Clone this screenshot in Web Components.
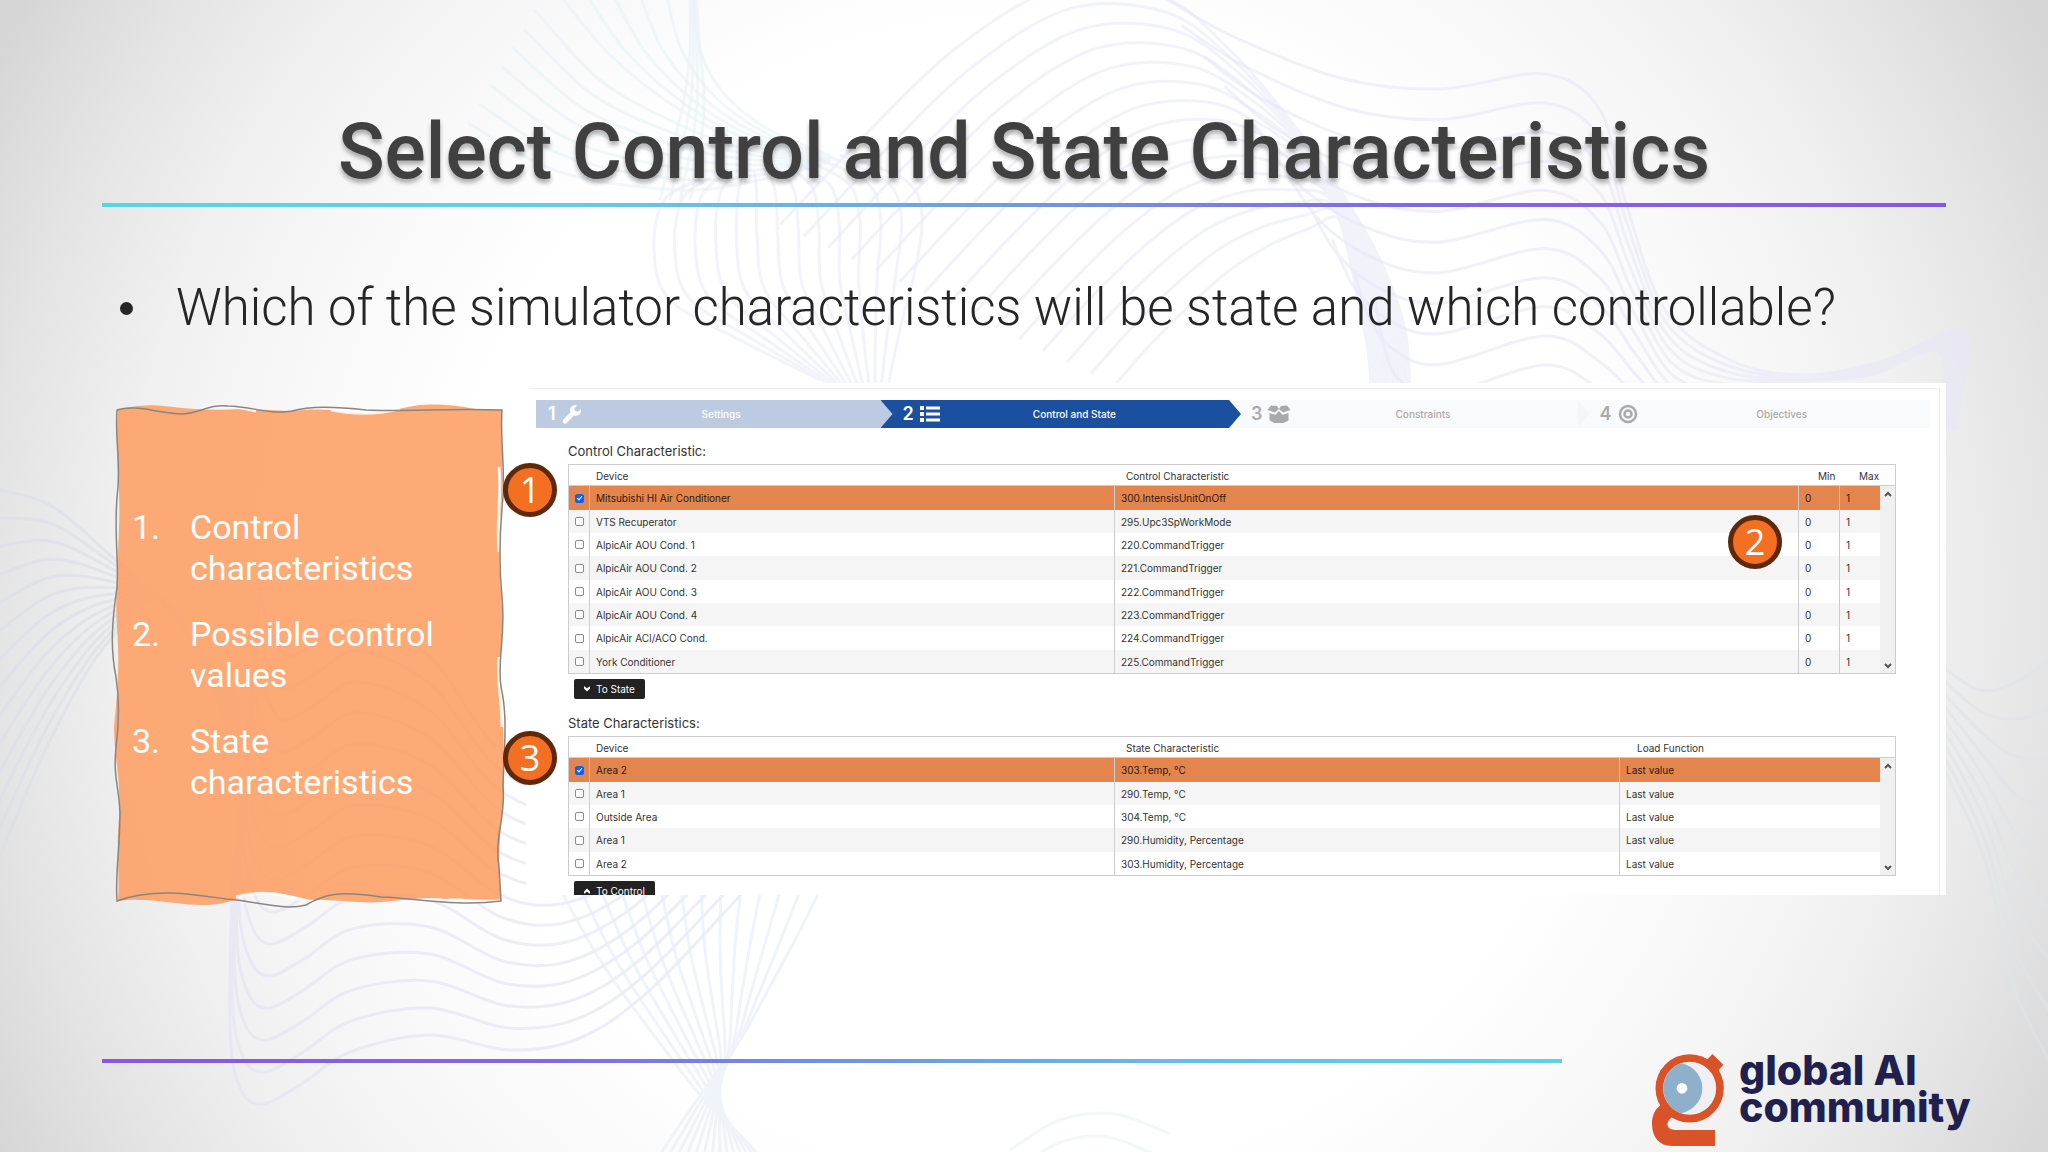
<!DOCTYPE html>
<html lang="en">
<head>
<meta charset="utf-8">
<title>Select Control and State Characteristics</title>
<style>
  body { margin: 0; font-family: Roboto, "Liberation Sans", sans-serif; color: #262626; }
</style>
</head>
<body>
<slide-page>
  <slide-title>Select Control and State Characteristics</slide-title>
  <slide-bullet>Which of the simulator characteristics will be state and which controllable?</slide-bullet>
  <slide-columns>
    <paper-note>
      <note-item number="1.">Control characteristics</note-item>
      <note-item number="2.">Possible control values</note-item>
      <note-item number="3.">State characteristics</note-item>
    </paper-note>
    <app-panel></app-panel>
  </slide-columns>
  <slide-footer slot="footer"></slide-footer>
</slide-page>

<script>
class Base extends HTMLElement {
  constructor() {
    super();
    this.attachShadow({ mode: 'open' });
  }
  connectedCallback() {
    if (!this.shadowRoot.firstChild) this.shadowRoot.innerHTML = this.render();
  }
}

/* Background: families of curves blended between two edge curves */
customElements.define('wave-field', class extends Base {
  spline(p) {
    let d = `M${p[0][0]} ${p[0][1]}`;
    for (let i = 0; i < p.length - 1; i++) {
      const a = p[i - 1] || p[i], b = p[i], c = p[i + 1], e = p[i + 2] || c;
      d += `C${[b[0] + (c[0] - a[0]) / 6, b[1] + (c[1] - a[1]) / 6, c[0] - (e[0] - b[0]) / 6, c[1] - (e[1] - b[1]) / 6, c[0], c[1]].map(v => v.toFixed(1)).join(' ')}`;
    }
    return d;
  }
  family(n, color, opacity, a, b) {
    let s = '';
    for (let i = 0; i < n; i++) {
      const t = i / (n - 1);
      s += `<path d="${this.spline(a.map((p, j) => [p[0] + (b[j][0] - p[0]) * t, p[1] + (b[j][1] - p[1]) * t]))}"/>`;
    }
    return `<g stroke="${color}" opacity="${opacity}">${s}</g>`;
  }
  render() {
    const f = this.family.bind(this);
    return `<style>
      :host { display: block; }
      svg { width: 100%; height: 100%; display: block; }
    </style>
    <svg viewBox="0 0 2048 1152" preserveAspectRatio="none" fill="none" stroke-width="3" aria-hidden="true">
    ${f(15, '#ebebfa', .6,
      [[780,225],[865,135],[960,45],[1060,-12],[1160,-5],[1230,50],[1290,120],[1340,190],[1380,260],[1405,330],[1410,400]],
      [[1115,385],[1150,345],[1190,305],[1230,270],[1270,245],[1310,228],[1338,218],[1350,260],[1360,310],[1368,350],[1372,400]])}
    ${f(11, '#e9e8f8', .6,
      [[1160,-5],[1230,35],[1340,78],[1440,89],[1545,74],[1600,110],[1625,200],[1665,310],[1730,360],[1800,375],[1880,362],[1955,330],[1968,350],[1955,430]],
      [[1375,300],[1385,350],[1400,380],[1440,395],[1545,365],[1600,390],[1640,420],[1680,440],[1720,420],[1790,385],[1870,375],[1930,350],[1945,370],[1935,430]])}
    ${f(6, '#e8f4f8', .6,
      [[693,-5],[700,50],[725,95],[770,130],[830,155]],
      [[560,-5],[610,55],[680,110],[750,145],[830,158]])}
    ${f(7, '#e8f3f7', .6,
      [[535,10],[600,80],[680,125],[750,150],[830,160]],
      [[468,123],[560,172],[680,190],[760,180],[830,162]])}
    ${f(4, '#e8f3f7', .6,
      [[690,-5],[690,50],[684,100],[672,150],[660,200]],
      [[696,-5],[700,50],[704,100],[700,150],[690,200]])}
    ${f(14, '#ebecf9', .6,
      [[700,180],[664,200],[654,250],[670,300],[740,340],[820,380]],
      [[840,155],[905,180],[922,215],[915,270],[900,330],[885,400]])}
    ${f(15, '#e4e3f3', .6,
      [[232,880],[230,1030],[240,1088],[262,1104],[300,1085],[350,1052],[430,1035],[510,1050],[580,1038],[650,990],[745,890]],
      [[262,560],[262,600],[275,640],[290,656],[320,640],[360,620],[430,657],[490,740],[540,770],[600,760],[660,720]])}
    ${f(14, '#e6eef7', .6,
      [[555,880],[600,960],[650,1030],[700,1095],[745,1140],[780,1180]],
      [[825,880],[795,940],[768,990],[740,1040],[690,1110],[650,1170]])}
    ${f(14, '#dcdfea', .6,
      [[-10,488],[50,505],[110,555],[160,600],[240,700]],
      [[-10,880],[50,740],[110,640],[170,605],[240,760]])}
    ${f(9, '#e0e5e8', .6,
      [[1940,665],[1980,690],[2020,680],[2060,650]],
      [[1940,760],[1985,860],[2015,990],[2060,1080]])}
    ${f(3, '#eaf3f5', .6,
      [[1010,1150],[1060,1120],[1115,1114],[1170,1134]],
      [[1020,1190],[1060,1165],[1100,1160],[1150,1180]])}
    </svg>`;
  }
});

customElements.define('slide-page', class extends Base {
  render() {
    return `<style>
      :host {
        display: flex; flex-direction: column; box-sizing: border-box; min-height: 100vh;
        position: relative; overflow: hidden; padding: 107px 0 6px;
        background: radial-gradient(circle 1200px at 50% 52%, #fff 0, #fff 48%, #f7f7f7 65%, #f0f0f0 75%, #e4e4e4 86%, #d6d6d6 97%);
      }
      wave-field { position: absolute; inset: 0; }
      main { position: relative; padding: 0 102px; }
      footer { position: relative; margin-top: auto; }
    </style>
    <wave-field></wave-field>
    <main><slot></slot></main>
    <footer><slot name="footer"></slot></footer>`;
  }
});

customElements.define('slide-title', class extends Base {
  render() {
    return `<style>
      :host { display: block; }
      h1 {
        margin: 0 0 6px; font-size: 77px; line-height: 90px; font-weight: 500; text-align: center;
        color: #404040; text-shadow: 0 4px 4px rgba(0,0,0,.3);
      }
      div { height: 4px; background: linear-gradient(90deg, #58d6e0, #62d0e0 25%, #8268e8 70%, #8a54ea); }
    </style>
    <h1><slot></slot></h1><div></div>`;
  }
});

customElements.define('slide-bullet', class extends Base {
  render() {
    return `<style>
      :host { display: block; margin-top: 70px; }
      ul { margin: 0; padding: 0 0 0 18px; list-style: none; }
      li { display: flex; align-items: center; gap: 43px; font-size: 51px; line-height: 62px; font-weight: 300; }
      i { width: 13px; height: 13px; border-radius: 50%; background: #262626; flex: none; }
    </style>
    <ul><li><i></i><span><slot></slot></span></li></ul>`;
  }
});

customElements.define('slide-columns', class extends Base {
  render() {
    return `<style>
      :host { display: flex; align-items: flex-start; gap: 23px; margin-top: 44px; padding-left: 14px; }
      ::slotted(paper-note) { flex: 0 0 387px; }
      ::slotted(app-panel) { flex: 1; min-width: 0; }
    </style><slot></slot>`;
  }
});

customElements.define('note-item', class extends Base {
  render() {
    return `<style>
      :host { display: flex; }
      b { flex: 0 0 58px; font-weight: 400; }
      p { margin: 0; flex: 1; }
    </style><b>${this.getAttribute('number')}</b><p><slot></slot></p>`;
  }
});

customElements.define('paper-note', class extends Base {
  render() {
    return `<style>
      :host { display: block; position: relative; margin-top: 24px; padding: 100px 20px 100px 16px; box-sizing: border-box; }
      svg { position: absolute; inset: 0; width: 100%; height: 100%; overflow: visible; }
      div { position: relative; display: grid; gap: 25px; color: #fff; font-size: 34px; line-height: 41px; }
    </style>
    <svg viewBox="0 0 387 496" preserveAspectRatio="none" aria-hidden="true">
      <path fill="#fda066" fill-opacity=".89" d="M2 2C20 -1 34 -3 48 -1C72 2 100 4 125 2C150 2 160 4 178 4C200 1 215 3 235 5C260 8 275 3 292 0C310 -5 340 -2 360 2L386 3C384 30 388 60 386 90C382 130 383 160 386 200C388 230 382 260 385 290C388 320 389 370 387 400C383 430 382 460 385 494C370 496 350 490 330 492C310 489 290 493 265 495C245 497 215 492 190 493C170 486 145 484 125 489C110 500 80 499 60 496C40 494 20 491 2 494C4 470 0 440 3 410C5 370 -2 350 -2 320C1 290 4 260 1 220C-1 190 2 160 3 120C5 80 -1 50 2 2Z"/>
      <path fill="none" stroke="#fff" stroke-width="3" opacity=".85" d="M85 2C100 -4 118 -1 140 4M215 3C240 8 262 7 284 2M120 490C150 481 175 490 195 495M295 494C330 492 350 495 384 494M383 60C386 90 380 110 383 145M383 250C381 280 386 290 386 320"/>
      <path fill="none" stroke="#8a8580" stroke-width="1.5" d="M1 3C20 -3 40 6 66 7C85 6 92 -3 112 -1C138 0 155 8 176 4C195 -2 225 0 250 3C290 5 330 1 386 3C384 30 389 60 387 90C383 130 383 160 386 190C390 230 381 250 385 280C392 310 388 340 387 380C390 410 378 430 383 460L385 494C340 500 300 491 265 490C225 484 210 486 190 498C165 504 140 494 110 492C80 488 40 480 1 494C-1 470 4 440 4 405C3 380 -3 370 0 340C4 310 3 290 0 270C-6 240 -4 215 1 180C3 150 -3 120 2 80C4 50 -1 30 1 3Z"/>
    </svg>
    <div><slot></slot></div>`;
  }
});

customElements.define('number-badge', class extends Base {
  render() {
    return `<style>
      :host {
        display: flex; align-items: center; justify-content: center; box-sizing: border-box;
        width: 54px; height: 54px; border: 5px solid #5e280b; border-radius: 50%;
        background: #f36f21; color: #fff; font: 400 36px/44px "Open Sans", "Noto Sans", sans-serif;
      }
    </style><slot></slot>`;
  }
});

customElements.define('step-nav', class extends Base {
  render() {
    const steps = [
      ['Settings', 'done', '<path d="M19 5.2a5.4 5.4 0 0 1-7.2 6.2L5 18.8a2.4 2.4 0 0 1-3.6-3.4l7-7A5.4 5.4 0 0 1 15 1.200l-2.800 3.300.9 2.500 2.500.7z"/>'],
      ['Control and State', 'now', '<path d="M0 2h4v4H0zM0 8h4v4H0zM0 14h4v4H0zM6 2.500h14v3H6zM6 8.500h14v3H6zM6 14.500h14v3H6z"/>'],
      ['Constraints', '', '<path d="M3 1.500 9 2 11 5l2-3 6-.5L22.500 6 15 8.500 11 5 7 8.500-.5 6zM1.500 9l6 1.700L11 7l3.500 3.700 6-1.700v7.500L15.500 19h-9l-5-2.500z"/>'],
      ['Objectives', '', '<circle cx="10" cy="10" r="8" fill="none" stroke="currentColor" stroke-width="2.500"/><circle cx="10" cy="10" r="3.500" fill="none" stroke="currentColor" stroke-width="2.500"/>']
    ];
    return `<style>
      :host { display: block; }
      ol { display: flex; margin: 0; padding: 0; list-style: none; }
      li { flex: 1 1 4px; min-width: 0; position: relative; }
      li:first-child { flex-basis: 0; }
      li:last-child { flex-basis: 8px; }
      button {
        display: flex; align-items: center; width: 100%; height: 28px; padding: 0 12px; border: 0;
        background: #f9fafb; color: #aaa; font: 500 10px/14px Inter, "Liberation Sans", sans-serif; text-align: center;
      }
      b { font-size: 18px; line-height: 28px; font-weight: 600; margin-right: 6px; }
      li + li b { margin-left: 10px; }
      svg { width: 20px; height: 20px; overflow: visible; fill: currentColor; }
      span { flex: 1; padding-right: 8px; }
      li:last-child button { padding-right: 4px; }
      li:last-child span { padding-right: 0; }
      li::after {
        content: ""; position: absolute; z-index: 1; left: 100%; top: 0; width: 12px; height: 28px;
        background: #f9fafb; clip-path: polygon(0 0, 100% 50%, 0 100%);
      }
      li:nth-child(3)::after { background: #f5f6f7; }
      li:last-child::after { display: none; }
      .done button, .done::after { background: #bccbe2; color: #fff; }
      .now button, .now::after { background: #1b4f9f; color: #fff; }
    </style>
    <ol>${steps.map((s, i) => `<li class="${s[1]}"><button type="button"><b>${i + 1}</b><svg viewBox="0 0 20 20" aria-hidden="true">${s[2]}</svg><span>${s[0]}</span></button></li>`).join('')}</ol>`;
  }
});

customElements.define('data-grid', class extends Base {
  render() {
    const control = this.getAttribute('kind') === 'control';
    const heads = control ? ['Device', 'Control Characteristic', 'Min', 'Max'] : ['Device', 'State Characteristic', 'Load Function'];
    const cols = control ? '<col class="dev"><col><col class="num"><col class="num">' : '<col class="dev"><col><col class="load">';
    const rows = control ? [
      ['Mitsubishi HI Air Conditioner', '300.IntensisUnitOnOff'],
      ['VTS Recuperator', '295.Upc3SpWorkMode'],
      ['AlpicAir AOU Cond. 1', '220.CommandTrigger'],
      ['AlpicAir AOU Cond. 2', '221.CommandTrigger'],
      ['AlpicAir AOU Cond. 3', '222.CommandTrigger'],
      ['AlpicAir AOU Cond. 4', '223.CommandTrigger'],
      ['AlpicAir ACI/ACO Cond.', '224.CommandTrigger'],
      ['York Conditioner', '225.CommandTrigger']
    ].map(r => [...r, '0', '1']) : [
      ['Area 2', '303.Temp, °C'], ['Area 1', '290.Temp, °C'], ['Outside Area', '304.Temp, °C'],
      ['Area 1', '290.Humidity, Percentage'], ['Area 2', '303.Humidity, Percentage']
    ].map(r => [...r, 'Last value']);
    const arrow = i => i === 0 ? '<svg viewBox="0 0 8 6" aria-hidden="true"><path d="M1 5 4 2 7 5"/></svg>'
      : i === rows.length - 1 ? '<svg class="low" viewBox="0 0 8 6" aria-hidden="true"><path d="M1 1 4 4 7 1"/></svg>' : '';
    return `<style>
      :host { display: block; }
      table {
        width: 100%; table-layout: fixed; border-collapse: separate; border-spacing: 0; background: #fff;
        border: 1px solid #ccc; font: 400 10px/14px Inter, "Liberation Sans", sans-serif; color: #333;
      }
      .tick { width: 20px; } .dev { width: 525px; } .num { width: 41px; } .load { width: 261px; } .bar { width: 15px; }
      th, td { padding: 0 6px; text-align: left; white-space: nowrap; }
      thead th, thead td { height: 21px; padding: 2px 0 0 12px; box-sizing: border-box; font-weight: 400; border-bottom: 1px solid #ccc; overflow: visible; }
      thead th:nth-child(2) { padding-left: 7px; }
      thead th:nth-child(n+4) { padding-left: 20px; }
      .state thead th:nth-child(4) { padding-left: 18px; }
      tbody tr { height: 23px; }
      tbody tr:nth-child(3n+1) { height: 24px; }
      tbody tr:nth-child(even) { background: #f5f5f5; }
      tbody tr:first-child { background: #e5854e; color: #2b1a0c; }
      tbody td + td { border-left: 1px solid #ccc; }
      tbody td:first-child { padding: 0; text-align: center; }
      tbody .end { padding: 0; border: 0; background: #f0f0f0; text-align: center; vertical-align: top; }
      .end svg { display: block; width: 8px; height: 6px; margin: 5px auto; fill: none; stroke: #555; stroke-width: 2; }
      .end .low { margin-top: 13px; margin-bottom: 0; }
      input {
        appearance: none; display: block; position: relative; box-sizing: border-box; width: 9px; height: 9px;
        margin: 0 auto; border: 1px solid #8a8a8a; border-radius: 2px; background: #fff;
      }
      input:checked { border-color: #0b66e4; background: #0b66e4; }
      input:checked::after {
        content: ""; position: absolute; left: 2px; top: 0; width: 2px; height: 4px;
        border: solid #fff; border-width: 0 1px 1px 0; transform: rotate(40deg);
      }
    </style>
    <table class="${control ? 'control' : 'state'}">
      <colgroup><col class="tick">${cols}<col class="bar"></colgroup>
      <thead><tr><td></td>${heads.map(h => `<th scope="col">${h}</th>`).join('')}<td></td></tr></thead>
      <tbody>${rows.map((r, i) => `<tr><td><input type="checkbox" id="r${i}"${i ? '' : ' checked'}></td><td><label for="r${i}">${r[0]}</label></td>${r.slice(1).map(c => `<td>${c}</td>`).join('')}<td class="end">${arrow(i)}</td></tr>`).join('')}</tbody>
    </table>`;
  }
});

customElements.define('move-button', class extends Base {
  render() {
    const up = this.hasAttribute('up');
    return `<style>
      :host { display: block; }
      button {
        display: flex; align-items: center; gap: 6px; height: 20px; margin: 0; padding: 0 10px; border: 0; border-radius: 2px;
        background: #222; color: #fff; font: 400 10px/14px Inter, "Liberation Sans", sans-serif;
      }
      svg { width: 6px; height: 6px; fill: none; stroke: #fff; stroke-width: 2; }
    </style>
    <button type="button"><svg viewBox="0 0 6 6" aria-hidden="true"><path d="${up ? 'M0 5 3 2 6 5' : 'M0 1 3 4 6 1'}"/></svg><span><slot></slot></span></button>`;
  }
});

customElements.define('app-panel', class extends Base {
  render() {
    return `<style>
      :host { display: block; position: relative; }
      .clip { overflow: hidden; max-height: 512px; background: #fff; }
      .app { margin: 5px 6px 0 4px; border: solid #eee; border-width: 1px 1px 0 0; padding-top: 11px; }
      step-nav { margin: 0 9px 0 6px; }
      section { margin: 15px 43px 0 38px; }
      section + section { margin-top: 16px; }
      h2 { margin: 0 0 5px; color: #333; font: 400 13px/16px Inter, "Liberation Sans", sans-serif; }
      move-button { margin: 5px 0 0 6px; }
      number-badge { position: absolute; }
      .one { left: -23px; top: 80px; }
      .two { right: 164px; top: 132px; }
      .three { left: -23px; top: 348px; }
    </style>
    <div class="clip"><div class="app">
      <step-nav></step-nav>
      <section><h2>Control Characteristic:</h2><data-grid kind="control"></data-grid><move-button>To State</move-button></section>
      <section><h2>State Characteristics:</h2><data-grid kind="state"></data-grid><move-button up>To Control</move-button></section>
    </div></div>
    <number-badge class="one">1</number-badge>
    <number-badge class="two">2</number-badge>
    <number-badge class="three">3</number-badge>`;
  }
});

customElements.define('slide-footer', class extends Base {
  render() {
    return `<style>
      :host { display: flex; align-items: flex-start; padding: 0 77px 0 102px; }
      .rule { flex: 1; height: 4px; margin: 5px 90px 0 0; background: linear-gradient(90deg, #8a54ea, #8268e8 30%, #62c0e4 75%, #58d6e0); }
      .logo { display: flex; gap: 15px; align-items: flex-start; }
      svg { width: 72px; height: 92px; display: block; }
      p { width: 232px; margin: -2px 0 0; color: #211f4d; font: 800 41px/37px Inter, "Liberation Sans", sans-serif; white-space: nowrap; }
    </style>
    <div class="rule"></div>
    <div class="logo">
      <svg viewBox="36 42 216 276" aria-hidden="true">
        <path fill="#d95228" d="M64 194C44 206 36 228 36 252C36 292 58 318 96 318H225V270H106C80 270 74 248 96 232Z"/>
        <path fill="#d95228" d="M217 42 250 74 224 104 190 72Z"/>
        <circle cx="149" cy="145" r="91" fill="#f1eff1" stroke="#d95228" stroke-width="23"/>
        <path fill="#8eb0cb" d="M122 70A80 80 0 0 0 122 220C160 212 187 182 187 145S160 76 122 70Z"/>
        <circle cx="126" cy="145" r="16" fill="#fff"/>
      </svg>
      <p>global AI<br>community</p>
    </div>`;
  }
});
</script>
</body>
</html>
